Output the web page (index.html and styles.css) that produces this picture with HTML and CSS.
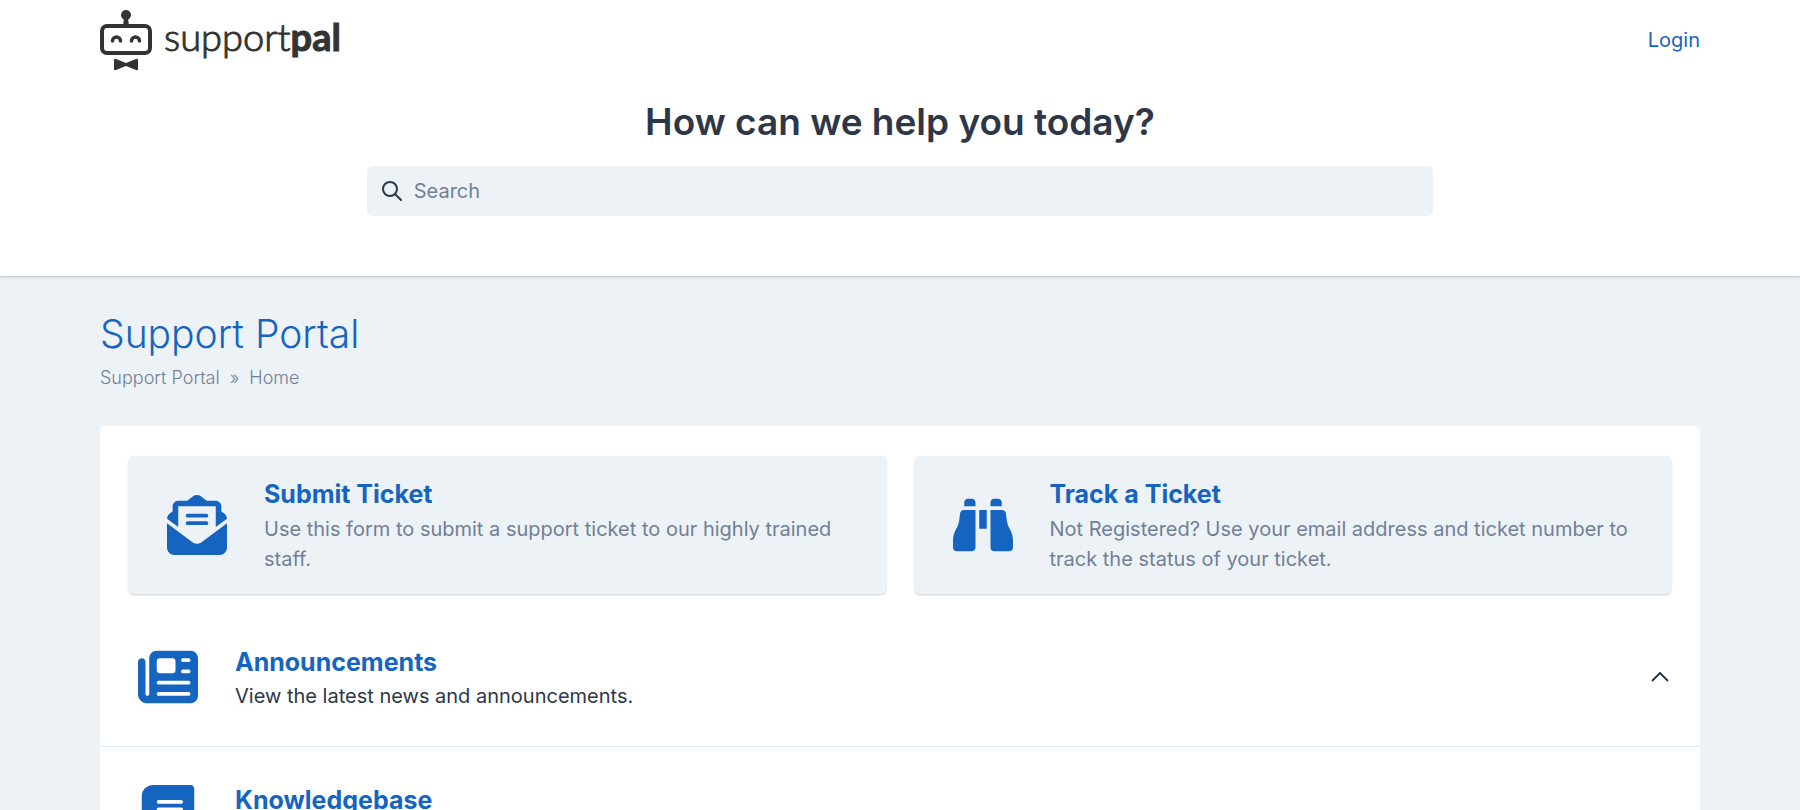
FILE: index.html
```html
<!DOCTYPE html>
<html lang="en">
<head>
    <meta charset="UTF-8">
    <meta name="viewport" content="width=device-width, initial-scale=1.0">
    <title>Support Portal</title>
    <link rel="stylesheet" href="styles.css">
</head>
<body>
    <header class="header">
        <div class="container">
            <div class="navbar">
                <a href="#" class="logo">
                    <svg class="logo-icon" viewBox="0 0 52 62" aria-hidden="true">
                        <circle cx="26" cy="6" r="5"/>
                        <path d="M24 9h4l1 8h-6z"/>
                        <rect x="2" y="17" width="48" height="27" rx="5" fill="none" stroke="#333" stroke-width="4"/>
                        <path d="M12.500 32a4 4 0 0 1 8 0M31.500 32a4 4 0 0 1 8 0" fill="none" stroke="#333" stroke-width="3.500" stroke-linecap="round"/>
                        <path d="M14 51q0-2 2-1l10 4 10-4q2-1 2 1v9q0 2-2 1l-10-4-10 4q-2 1-2-1z"/>
                    </svg>
                    <span class="logo-text">support<b>pal</b></span>
                </a>
                <a href="#" class="login">Login</a>
            </div>
            <div class="hero">
                <h2>How can we help you today?</h2>
                <form class="search">
                    <label for="search" aria-label="Search">
                        <svg class="search-icon" viewBox="0 0 20 20" aria-hidden="true">
                            <circle cx="8" cy="8" r="7"/>
                            <path d="M13 13l6 6"/>
                        </svg>
                    </label>
                    <input type="text" id="search" name="search" placeholder="Search">
                </form>
            </div>
        </div>
    </header>

    <main class="container">
        <h1>Support Portal</h1>
        <nav class="breadcrumb">
            <a href="#">Support Portal</a>
            <span>»</span>
            <a href="#">Home</a>
        </nav>

        <div class="panel">
            <div class="cards">
                <a href="#" class="card">
                    <svg class="icon" viewBox="0 0 512 512" aria-hidden="true"><path d="M215.400 96H96V273.400L.2 202.500c1.600-18.100 10.900-34.900 25.700-45.800L48 140.300V96c0-26.500 21.500-48 48-48h76.600l49.900-36.900C232.200 3.900 243.900 0 256 0s23.800 3.900 33.500 11L339.400 48H416c26.500 0 48 21.500 48 48v44.300l22.100 16.400c14.800 10.900 24.100 27.700 25.700 45.800L416 273.400V96H215.400zM0 448V242.100l217.600 161.200c11.100 8.200 24.600 12.700 38.400 12.700s27.300-4.400 38.400-12.700L512 242.100V448c0 35.300-28.700 64-64 64H64c-35.300 0-64-28.700-64-64zM176 160h160c8.800 0 16 7.200 16 16s-7.200 16-16 16H176c-8.800 0-16-7.200-16-16s7.200-16 16-16zm0 64h160c8.800 0 16 7.200 16 16s-7.200 16-16 16H176c-8.800 0-16-7.200-16-16s7.200-16 16-16z"/></svg>
                    <div>
                        <h3>Submit Ticket</h3>
                        <p>Use this form to submit a support ticket to our highly trained staff.</p>
                    </div>
                </a>
                <a href="#" class="card">
                    <svg class="icon" viewBox="0 0 512 512" aria-hidden="true"><path d="M128 32h32c17.700 0 32 14.300 32 32v32H96V64c0-17.700 14.300-32 32-32zm64 96v320c0 17.700-14.300 32-32 32H32c-17.700 0-32-14.300-32-32v-59.100c0-34.600 9.400-68.600 27.200-98.300C40.900 267.800 49.700 242.400 53 216l7.500-60c2-16 15.600-28 31.800-28H192zm227.800 0c16.100 0 29.800 12 31.800 28l7.400 60c3.300 26.400 12.100 51.800 25.800 74.600 17.800 29.700 27.200 63.700 27.200 98.300V448c0 17.700-14.300 32-32 32H352c-17.700 0-32-14.300-32-32V128h99.800zM320 64c0-17.700 14.300-32 32-32h32c17.700 0 32 14.300 32 32v32h-96V64zm-32 64v160h-64V128h64z"/></svg>
                    <div>
                        <h3>Track a Ticket</h3>
                        <p>Not Registered? Use your email address and ticket number to track the status of your ticket.</p>
                    </div>
                </a>
            </div>

            <section class="row">
                <svg class="icon" viewBox="0 0 512 512" aria-hidden="true"><path d="M96 96c0-35.300 28.700-64 64-64h288c35.300 0 64 28.700 64 64v320c0 35.300-28.700 64-64 64H80c-44.200 0-80-35.800-80-80V128c0-17.700 14.300-32 32-32s32 14.300 32 32v272c0 8.800 7.200 16 16 16s16-7.200 16-16V96zm64 24v80c0 13.300 10.700 24 24 24h112c13.300 0 24-10.700 24-24v-80c0-13.300-10.700-24-24-24H184c-13.300 0-24 10.700-24 24zm208-8c0 8.800 7.200 16 16 16h48c8.800 0 16-7.200 16-16s-7.200-16-16-16h-48c-8.800 0-16 7.200-16 16zm0 96c0 8.800 7.200 16 16 16h48c8.800 0 16-7.200 16-16s-7.200-16-16-16h-48c-8.800 0-16 7.200-16 16zM160 304c0 8.800 7.200 16 16 16h256c8.800 0 16-7.200 16-16s-7.200-16-16-16H176c-8.800 0-16 7.200-16 16zm0 96c0 8.800 7.200 16 16 16h256c8.800 0 16-7.200 16-16s-7.200-16-16-16H176c-8.800 0-16 7.200-16 16z"/></svg>
                <div class="row-text">
                    <h3><a href="#">Announcements</a></h3>
                    <p>View the latest news and announcements.</p>
                </div>
                <button type="button" class="toggle" aria-label="Toggle announcements">
                    <svg viewBox="0 0 18 10" aria-hidden="true"><path d="M1 9l8-8 8 8"/></svg>
                </button>
            </section>

            <section class="row">
                <svg class="icon" viewBox="-32 0 512 512" aria-hidden="true"><path d="M96 0C43 0 0 43 0 96v320c0 53 43 96 96 96h320c17.700 0 32-14.300 32-32s-14.300-32-32-32v-64c17.700 0 32-14.300 32-32V32c0-17.700-14.300-32-32-32H96zm0 384h256v64H96c-17.700 0-32-14.300-32-32s14.300-32 32-32zm32-240c0-8.800 7.200-16 16-16h192c8.800 0 16 7.200 16 16s-7.200 16-16 16H144c-8.800 0-16-7.200-16-16zm16 48h192c8.800 0 16 7.200 16 16s-7.200 16-16 16H144c-8.800 0-16-7.200-16-16s7.200-16 16-16z"/></svg>
                <div class="row-text">
                    <h3><a href="#">Knowledgebase</a></h3>
                </div>
                <button type="button" class="toggle" aria-label="Toggle knowledgebase">
                    <svg viewBox="0 0 18 10" aria-hidden="true"><path d="M1 9l8-8 8 8"/></svg>
                </button>
            </section>
        </div>
    </main>
</body>
</html>
```
FILE: styles.css
```css
* {
    box-sizing: border-box;
}

body {
    margin: 0;
    background-color: #edf2f7;
    color: #2d3748;
    font-family: Inter, "Liberation Sans", sans-serif;
    font-size: 20px;
    font-weight: 400;
    line-height: 30px;
}

h1, h2, h3, p {
    margin: 0;
}

a {
    color: #1565c0;
    text-decoration: none;
}

.container {
    max-width: 1640px;
    margin: 0 auto;
    padding: 0 20px;
}

.header {
    background-color: #fff;
    padding-bottom: 60px;
    box-shadow: 0 1px 3px rgba(0, 0, 0, 0.1), 0 1px 2px rgba(0, 0, 0, 0.1);
}

.navbar {
    display: flex;
    justify-content: space-between;
    align-items: center;
    height: 80px;
}

.logo {
    display: flex;
    align-items: center;
    gap: 12px;
    color: #333;
}

.logo-icon {
    width: 52px;
    height: 62px;
    fill: #333;
}

.logo-text {
    font-family: Lato, sans-serif;
    font-size: 38px;
    font-weight: 300;
    line-height: 40px;
    padding-bottom: 8px;
    -webkit-text-stroke: 1px #333;
}

.logo-text b {
    font-weight: 700;
}

.hero {
    width: 66.66%;
    margin: 0 auto;
    padding-top: 16px;
}

.hero h2 {
    margin-bottom: 18px;
    font-size: 37px;
    font-weight: 600;
    line-height: 52px;
    text-align: center;
}

.search {
    display: flex;
    align-items: center;
    gap: 12px;
    height: 50px;
    padding: 0 15px;
    background-color: #edf2f7;
    border-radius: 5px;
}

.search label {
    display: flex;
}

.search-icon {
    width: 20px;
    height: 20px;
    fill: none;
    stroke: #2d3748;
    stroke-width: 2;
    stroke-linecap: round;
}

.search input {
    flex: 1;
    padding: 0;
    border: none;
    outline: none;
    background: none;
    color: #2d3748;
    font: inherit;
}

.search input::placeholder {
    color: #718096;
}

h1 {
    margin-top: 31px;
    color: #1565c0;
    font-size: 39px;
    font-weight: 300;
    line-height: 54px;
}

.breadcrumb {
    display: flex;
    gap: 10px;
    padding-top: 2px;
    font-size: 18px;
    font-weight: 300;
    color: #718096;
}

.breadcrumb a {
    color: #718096;
}

.panel {
    margin-top: 33px;
    background-color: #fff;
    border-radius: 5px;
}

.cards {
    display: grid;
    grid-template-columns: 1fr 1fr;
    gap: 29px;
    padding: 30px 29px 15px;
}

.card {
    display: flex;
    align-items: center;
    gap: 37px;
    padding: 20px 38px;
    background-color: #edf2f7;
    border-radius: 5px;
    box-shadow: 0 1px 3px rgba(0, 0, 0, 0.1), 0 1px 2px rgba(0, 0, 0, 0.1);
    color: #718096;
}

.icon {
    flex: none;
    width: 60px;
    height: 60px;
    fill: #1565c0;
}

h3 {
    color: #1565c0;
    font-size: 25px;
    font-weight: 700;
    line-height: 38px;
}

.card h3 {
    margin-bottom: 2px;
    line-height: 36px;
}

.row {
    display: flex;
    align-items: center;
    gap: 37px;
    min-height: 138px;
    padding: 34px 31px 35px 38px;
    border-bottom: 1px solid #e2e8f0;
}

.row-text {
    flex: 1;
    min-height: 68px;
}

.toggle {
    display: flex;
    padding: 0;
    border: none;
    background: none;
    cursor: pointer;
}

.toggle svg {
    width: 18px;
    height: 10px;
    fill: none;
    stroke: #2d3748;
    stroke-width: 2;
}
```
